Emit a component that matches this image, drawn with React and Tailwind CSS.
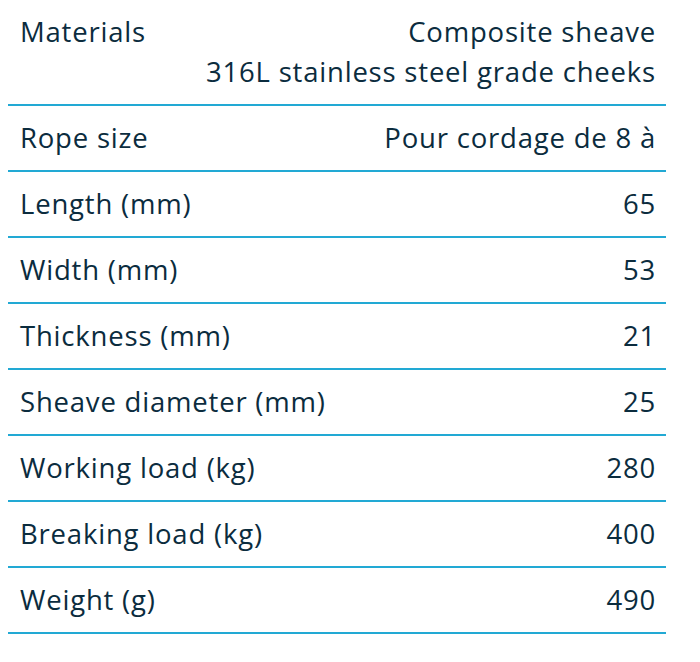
import React from 'react';

const rows = [
  { label: 'Materials', value: ['Composite sheave', '316L stainless steel grade cheeks'] },
  { label: 'Rope size', value: ['Pour cordage de 8 à'] },
  { label: 'Length (mm)', value: ['65'] },
  { label: 'Width (mm)', value: ['53'] },
  { label: 'Thickness (mm)', value: ['21'] },
  { label: 'Sheave diameter (mm)', value: ['25'] },
  { label: 'Working load (kg)', value: ['280'] },
  { label: 'Breaking load (kg)', value: ['400'] },
  { label: 'Weight (g)', value: ['490'] },
];

export default function App() {
  return (
    <div className="min-h-[662px] w-[700px] bg-white pl-2 font-['Open_Sans',sans-serif] text-[27.5px] tracking-[0.8px] text-[#0b2c3e]">
      <div className="w-[658px]">
        {rows.map((row) => (
          <div key={row.label} className="flex justify-between border-b-2 border-[#22a9d4] py-3 pl-3 pr-[10px] leading-[40px]">
            <div>{row.label}</div>
            <div className="text-right">
              {row.value.map((v) => (
                <div key={v}>{v}</div>
              ))}
            </div>
          </div>
        ))}
      </div>
    </div>
  );
}
